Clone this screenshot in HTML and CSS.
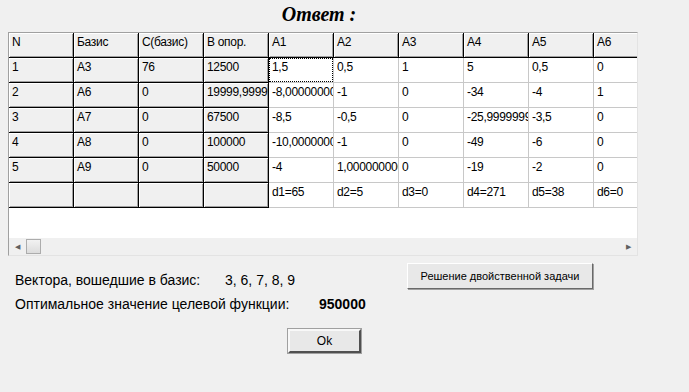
FILE: index.html
```html
<!DOCTYPE html>
<html>
<head>
    <meta charset="utf-8" />
    <title>Ответ</title>
    <link rel="stylesheet" href="styles.css">
</head>
<body>
    <div class="answer-main">
        <h1 class="answer-title">Ответ :</h1>

        <div class="grid-box">
            <div class="grid-view">
                <table class="grid">
                    <tr>
                        <td class="fixed">N</td>
                        <td class="fixed">Базис</td>
                        <td class="fixed">C(базис)</td>
                        <td class="fixed">B опор.</td>
                        <td class="fixed">A1</td>
                        <td class="fixed">A2</td>
                        <td class="fixed">A3</td>
                        <td class="fixed">A4</td>
                        <td class="fixed">A5</td>
                        <td class="fixed">A6</td>
                    </tr>
                    <tr>
                        <td class="fixed">1</td>
                        <td class="fixed">A3</td>
                        <td class="fixed">76</td>
                        <td class="fixed">12500</td>
                        <td class="cell-focus"><span class="focus-box">1,5</span></td>
                        <td>0,5</td>
                        <td>1</td>
                        <td>5</td>
                        <td>0,5</td>
                        <td>0</td>
                    </tr>
                    <tr>
                        <td class="fixed">2</td>
                        <td class="fixed">A6</td>
                        <td class="fixed">0</td>
                        <td class="fixed">19999,99999</td>
                        <td>-8,0000000000</td>
                        <td>-1</td>
                        <td>0</td>
                        <td>-34</td>
                        <td>-4</td>
                        <td>1</td>
                    </tr>
                    <tr>
                        <td class="fixed">3</td>
                        <td class="fixed">A7</td>
                        <td class="fixed">0</td>
                        <td class="fixed">67500</td>
                        <td>-8,5</td>
                        <td>-0,5</td>
                        <td>0</td>
                        <td>-25,99999999</td>
                        <td>-3,5</td>
                        <td>0</td>
                    </tr>
                    <tr>
                        <td class="fixed">4</td>
                        <td class="fixed">A8</td>
                        <td class="fixed">0</td>
                        <td class="fixed">100000</td>
                        <td>-10,000000000</td>
                        <td>-1</td>
                        <td>0</td>
                        <td>-49</td>
                        <td>-6</td>
                        <td>0</td>
                    </tr>
                    <tr>
                        <td class="fixed">5</td>
                        <td class="fixed">A9</td>
                        <td class="fixed">0</td>
                        <td class="fixed">50000</td>
                        <td>-4</td>
                        <td>1,0000000000</td>
                        <td>0</td>
                        <td>-19</td>
                        <td>-2</td>
                        <td>0</td>
                    </tr>
                    <tr>
                        <td class="fixed"></td>
                        <td class="fixed"></td>
                        <td class="fixed"></td>
                        <td class="fixed"></td>
                        <td>d1=65</td>
                        <td>d2=5</td>
                        <td>d3=0</td>
                        <td>d4=271</td>
                        <td>d5=38</td>
                        <td>d6=0</td>
                    </tr>
                </table>
            </div>
            <div class="hscroll">
                <span class="hscroll-arrow">&#9664;</span>
                <span class="hscroll-thumb"></span>
                <span class="hscroll-track"></span>
                <span class="hscroll-arrow">&#9654;</span>
            </div>
        </div>

        <div class="answer-info">
            <div class="answer-info-text">
                <p class="answer-row">
                    <span class="answer-label answer-label-short">Вектора, вошедшие в базис:</span>
                    <span class="answer-value">3, 6, 7, 8, 9</span>
                </p>
                <p class="answer-row">
                    <span class="answer-label answer-label-long">Оптимальное значение целевой функции:</span>
                    <span class="answer-value answer-value-bold">950000</span>
                </p>
            </div>
            <button class="win-button dual-button">Решение двойственной задачи</button>
        </div>

        <div class="ok-row">
            <button class="win-button ok-button">Ok</button>
        </div>
    </div>
</body>
</html>
```

FILE: styles.css
```css
body {
    margin: 0;
    padding: 0;
    background-color: #F0F0F0;
    font-family: "Liberation Sans", Arial, sans-serif;
    color: #000000;
}

.answer-main {
    width: 689px;
    height: 392px;
}

.answer-title {
    margin: 0;
    width: 638px;
    height: 32px;
    text-align: center;

    font-family: "Liberation Serif", "Times New Roman", serif;
    font-style: italic;
    font-weight: bold;
    font-size: 20px;
    line-height: 28px;
}

/* string grid */

.grid-box {
    margin-left: 8px;
    width: 628px;
    border-top: 1px solid #A0A0A0;
    border-left: 1px solid #A0A0A0;
    border-right: 1px solid #E3E3E3;
    border-bottom: 1px solid #E3E3E3;
    background-color: #FFFFFF;
}

.grid-view {
    height: 204px;
    overflow: hidden;
}

.grid {
    table-layout: fixed;
    border-collapse: separate;
    border-spacing: 0;
    width: 650px;
}

.grid td {
    box-sizing: content-box;
    width: 61px;
    height: 22px;
    padding: 2px 0 0 3px;
    vertical-align: top;
    white-space: nowrap;
    overflow: hidden;
    text-overflow: clip;

    font-size: 12px;
    line-height: 14px;
    letter-spacing: -0.3px;

    border-right: 1px solid #C8C8C8;
    border-bottom: 1px solid #C8C8C8;
}

.grid td.fixed {
    background-color: #F0F0F0;
    border-right: 1px solid #000000;
    border-bottom: 1px solid #000000;
    box-shadow: inset 1px 1px 0 #FFFFFF, inset -1px -1px 0 #A0A0A0;
}

.grid td.cell-focus {
    padding: 0;
    width: 64px;
    height: 24px;
}

.focus-box {
    display: block;
    width: 64px;
    height: 24px;
    padding: 1px 0 0 2px;
    border: 1px dotted #000000;
    box-sizing: border-box;
}

.hscroll {
    display: flex;
    align-items: center;
    height: 17px;
    background-color: #F0F0F0;
    border-top: 1px solid #FFFFFF;
}

.hscroll-arrow {
    width: 17px;
    text-align: center;
    font-size: 7px;
    color: #606060;
}

.hscroll-thumb {
    width: 15px;
    height: 15px;
    box-sizing: border-box;
    border: 1px solid #ACACAC;
    background: linear-gradient(#F2F2F2, #DCDCDC);
}

.hscroll-track {
    flex: 1;
}

/* bottom part */

.answer-info {
    display: flex;
    align-items: flex-start;
    padding-left: 15px;
    margin-top: 7px;
}

.answer-info-text {
    width: 392px;
    padding-top: 9px;
}

.answer-row {
    display: flex;
    margin: 0;
    height: 24px;
    font-size: 14px;
    line-height: 16px;
    white-space: nowrap;
}

.answer-label-short {
    width: 210px;
}

.answer-label-long {
    width: 304px;
}

.answer-value-bold {
    font-weight: bold;
}

.win-button {
    font-family: "Liberation Sans", Arial, sans-serif;
    font-size: 11px;
    color: #000000;
    background-color: #E8E8E8;
    border: 1px solid;
    border-color: #FFFFFF #696969 #696969 #FFFFFF;
    box-shadow: 1px 1px 0 #A0A0A0;
    padding: 0;
}

.dual-button {
    width: 186px;
    height: 26px;
}

.ok-row {
    display: flex;
    padding-left: 288px;
    margin-top: 9px;
}

.ok-button {
    width: 73px;
    height: 24px;
    font-size: 12px;
    border: 2px solid;
    border-color: #F8F8F8 #505050 #505050 #F8F8F8;
    outline: 1px solid #A0A0A0;
    box-shadow: none;
}
```
